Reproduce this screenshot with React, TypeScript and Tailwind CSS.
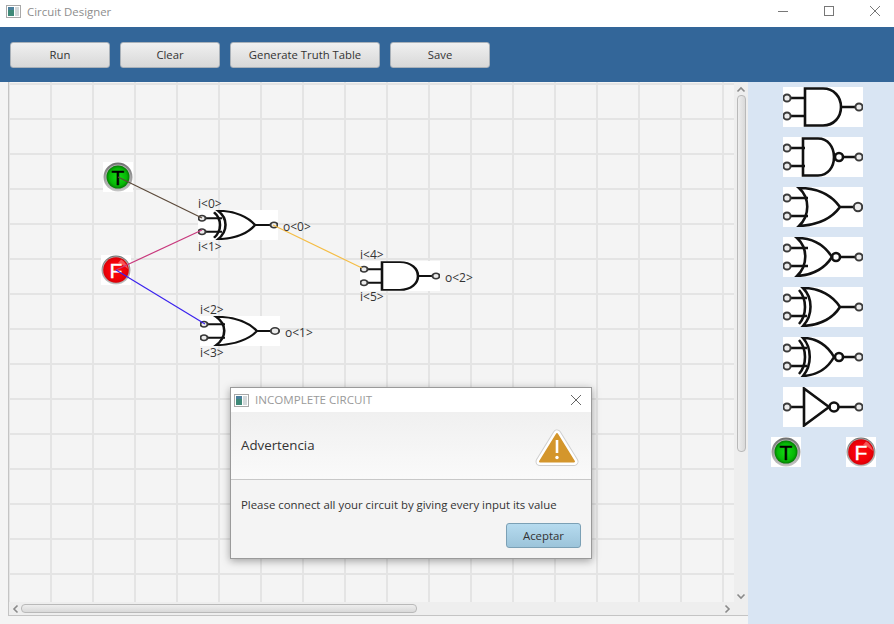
const FONT = "font-['Open_Sans',sans-serif]";

type GateKind = "and" | "nand" | "or" | "nor" | "xor" | "xnor" | "not";

function Pin({ cx, cy, r = 3.6 }: { cx: number; cy: number; r?: number }) {
  return <circle cx={cx} cy={cy} r={r} fill="#ececec" stroke="#3a3a3a" strokeWidth="2" />;
}

function Gate({ kind, className }: { kind: GateKind; className: string }) {
  const stroke = { fill: "none", stroke: "#111", strokeWidth: 2.6 };
  return (
    <svg viewBox="0 0 80 40" preserveAspectRatio="none" className={`bg-white ${className}`}>
      {kind === "not" ? (
        <>
          <path d="M7 20H21M21 1.5V38.5L46 20ZM56 20H72" {...stroke} />
          <circle cx="51" cy="20" r="4.5" {...stroke} />
          <Pin cx={4} cy={20} />
          <Pin cx={76} cy={20} />
        </>
      ) : (
        <>
          {(kind === "and" || kind === "nand") && (
            <>
              <path d="M7 11H22M7 29H22" {...stroke} />
              {kind === "and" ? (
                <path d="M22 1.5H40C51 1.5 58 10 58 20C58 30 51 38.5 40 38.5H22Z M58 20H72" {...stroke} />
              ) : (
                <path d="M20 1.5H35C45 1.5 51 10 51 20C51 30 45 38.5 35 38.5H20Z M60 20H72" {...stroke} />
              )}
            </>
          )}
          {(kind === "or" || kind === "nor") && (
            <>
              <path d="M7 11H25M7 29H25" {...stroke} />
              {kind === "or" ? (
                <path d="M16 1C36 1 49 9 57 20C49 31 36 38 16 39C27 28 27 11 16 1Z M57 20H71" {...stroke} />
              ) : (
                <path d="M14 1C30 1 42 9 49 20C42 31 30 38 14 39C25 28 25 11 14 1Z M58 20H72" {...stroke} />
              )}
            </>
          )}
          {(kind === "xor" || kind === "xnor") && (
            <>
              <path d="M7 11H24M7 29H24" {...stroke} />
              <path d="M16 3C24 12 24 28 16 37" {...stroke} />
              {kind === "xor" ? (
                <path d="M20 1C37 1 50 9 57 20C50 31 37 38 20 39C30 28 30 11 20 1Z M57 20H72" {...stroke} />
              ) : (
                <path d="M20 1C34 1 45 9 51 20C45 31 34 38 20 39C29 28 29 11 20 1Z M60 20H72" {...stroke} />
              )}
            </>
          )}
          {(kind === "nand" || kind === "nor" || kind === "xnor") && (
            <circle cx={kind === "nor" ? 53 : 56} cy="20" r="4" {...stroke} />
          )}
          <Pin cx={4} cy={11} />
          <Pin cx={4} cy={29} />
          <Pin cx={kind === "or" ? 75 : 76} cy={20} r={kind === "or" ? 4.2 : 3.6} />
        </>
      )}
    </svg>
  );
}

function Node({ value, className }: { value: "T" | "F"; className: string }) {
  const on = value === "T";
  const ringId = `ring-${value}`;
  const coreId = `core-${value}`;
  return (
    <svg viewBox="0 0 30 30" className={`bg-white ${className}`}>
      <defs>
        <linearGradient id={ringId} x1="0" y1="0" x2="0" y2="1">
          <stop offset="0" stopColor="#6f6f6f" />
          <stop offset="1" stopColor="#c6c6c6" />
        </linearGradient>
        <radialGradient id={coreId}>
          <stop offset="0" stopColor={on ? "#16dc16" : "#ff0a0a"} />
          <stop offset="0.75" stopColor={on ? "#06b806" : "#f00008"} />
          <stop offset="1" stopColor={on ? "#037a03" : "#d80006"} />
        </radialGradient>
      </defs>
      <circle cx="15" cy="15" r="14.5" fill={`url(#${ringId})`} />
      <circle cx="15" cy="15" r={on ? 12.5 : 13.5} fill="#b0b0b0" />
      <circle cx="15" cy="15" r={on ? 11.5 : 12.8} fill={`url(#${coreId})`} />
      {!on && <path d="M20 4.5C23.5 6.5 26.5 10.5 27 14C24 11 20 9 17 8Z" fill="#ff8a8a" opacity="0.6" />}
      <text
        x="15"
        y="22.5"
        textAnchor="middle"
        fontSize="21"
        fontFamily="Liberation Sans, sans-serif"
        fill={on ? "#000" : "#fff"}
        stroke={on ? "#000" : "#fff"}
        strokeWidth="0.4"
      >
        {value}
      </text>
    </svg>
  );
}

function WindowIcon({ className }: { className: string }) {
  return (
    <svg viewBox="0 0 15 13" className={className}>
      <rect x="0.5" y="0.5" width="14" height="12" fill="#fff" stroke="#a8a8a8" />
      <rect x="2" y="2" width="6" height="9" fill="#3f8a78" />
      <rect x="2" y="2" width="6" height="3" fill="#4a7f9c" />
      <rect x="9" y="2" width="4" height="9" fill="#d2d8da" />
    </svg>
  );
}

function ToolButton({ label, width }: { label: string; width: string }) {
  return (
    <button
      className={`h-[26px] ${width} rounded-[3px] border border-[#a9b1b9] bg-gradient-to-b from-[#f0f0f0] to-[#d8d8d8] pt-[1px] text-[11.3px] text-[#333]`}
    >
      {label}
    </button>
  );
}

function Label({ text, className }: { text: string; className: string }) {
  return <span className={`absolute text-xs leading-4 text-[#333] ${className}`}>{text}</span>;
}

function Chevron({ d, className }: { d: string; className: string }) {
  return (
    <svg viewBox="0 0 10 10" className={className}>
      <path d={d} fill="none" stroke="#8a8a8a" strokeWidth="1.6" />
    </svg>
  );
}

export default function App() {
  return (
    <div className={`relative flex h-[624px] w-[894px] flex-col overflow-hidden bg-[#f4f4f4] ${FONT}`}>
      {/* title bar */}
      <div className="flex h-[27px] items-center bg-white pb-[5px] pl-[6px]">
        <WindowIcon className="h-[13px] w-[15px]" />
        <span className="ml-[6px] mt-[1px] text-[11.4px] text-[#8d8d8d]">Circuit Designer</span>
        <div className="ml-auto flex items-center gap-[36px] pr-[14px]">
          <svg viewBox="0 0 10 10" className="h-[10px] w-[10px]">
            <path d="M0 5.5H10" stroke="#777" />
          </svg>
          <svg viewBox="0 0 10 10" className="h-[10px] w-[10px]">
            <rect x="0.5" y="0.5" width="9" height="9" fill="none" stroke="#777" />
          </svg>
          <svg viewBox="0 0 10 10" className="h-[10px] w-[10px]">
            <path d="M0 0L10 10M10 0L0 10" stroke="#777" />
          </svg>
        </div>
      </div>

      {/* toolbar */}
      <div className="flex h-[55px] items-center gap-[10px] bg-[#336699] px-[10px]">
        <ToolButton label="Run" width="w-[100px]" />
        <ToolButton label="Clear" width="w-[100px]" />
        <ToolButton label="Generate Truth Table" width="w-[150px]" />
        <ToolButton label="Save" width="w-[100px]" />
      </div>

      <div className="flex flex-1">
        {/* canvas area */}
        <div className="flex w-[748px] flex-col pb-2 pl-2">
          <div className="flex flex-1 flex-col border-b border-l border-[#c4c4c4]">
            <div className="flex flex-1">
              <div className="relative flex-1 overflow-hidden bg-[#f4f4f4] bg-[linear-gradient(to_right,#e4e4e4_2px,transparent_2px),linear-gradient(to_bottom,#e4e4e4_2px,transparent_2px)] bg-[size:42px_35px] bg-[position:-1px_1px]">
                <Node value="T" className="absolute left-[94px] top-[80px] h-[30px] w-[30px]" />
                <Node value="F" className="absolute left-[92px] top-[173px] h-[30px] w-[30px]" />
                <Gate kind="xor" className="absolute left-[189px] top-[128px] h-[30px] w-[80px]" />
                <Gate kind="or" className="absolute left-[191px] top-[234px] h-[30px] w-[80px]" />
                <Gate kind="and" className="absolute left-[351px] top-[179px] h-[30px] w-[80px]" />
                <svg viewBox="0 0 725 520" className="absolute left-0 top-0 h-[520px] w-[725px]">
                  <path d="M109 95L193 136" stroke="#5c4a3a" strokeWidth="1.2" />
                  <path d="M107 188L193 148" stroke="#c8397d" strokeWidth="1.2" />
                  <path d="M107 188L196 242" stroke="#3a22ee" strokeWidth="1.2" />
                  <path d="M264 143L353 186" stroke="#f5bd45" strokeWidth="1.2" />
                </svg>
                <Label text="i<0>" className="left-[189px] top-[114px]" />
                <Label text="i<1>" className="left-[189px] top-[157px]" />
                <Label text="o<0>" className="left-[274px] top-[137px]" />
                <Label text="i<2>" className="left-[191px] top-[220px]" />
                <Label text="i<3>" className="left-[191px] top-[263px]" />
                <Label text="o<1>" className="left-[276px] top-[243px]" />
                <Label text="i<4>" className="left-[351px] top-[165px]" />
                <Label text="i<5>" className="left-[351px] top-[207px]" />
                <Label text="o<2>" className="left-[436px] top-[188px]" />
              </div>
              {/* vertical scrollbar */}
              <div className="flex w-[14px] flex-col items-center bg-[#eeeeee] pt-[3px]">
                <Chevron d="M1.5 6.5L5 3L8.5 6.5" className="h-[10px] w-[10px]" />
                <div className="h-[357px] w-[9px] rounded-[4px] border border-[#b9b9b9] bg-gradient-to-r from-[#eeeeee] to-[#d9d9d9]" />
                <Chevron d="M1.5 3.5L5 7L8.5 3.5" className="mt-auto mb-[1px] h-[10px] w-[10px]" />
              </div>
            </div>
            {/* horizontal scrollbar */}
            <div className="flex h-[13px] items-center bg-[#eeeeee] pl-[2px] pr-[16px]">
              <Chevron d="M6.5 1.5L3 5L6.5 8.5" className="h-[10px] w-[10px]" />
              <div className="h-[9px] w-[396px] rounded-[4px] border border-[#b9b9b9] bg-gradient-to-b from-[#eeeeee] to-[#d9d9d9]" />
              <Chevron d="M3.5 1.5L7 5L3.5 8.5" className="ml-auto h-[10px] w-[10px]" />
            </div>
          </div>
        </div>

        {/* palette */}
        <div className="flex flex-1 flex-col gap-[10px] bg-[#d9e5f3] pl-[35px] pt-[5px]">
          <Gate kind="and" className="h-[40px] w-[80px]" />
          <Gate kind="nand" className="h-[40px] w-[80px]" />
          <Gate kind="or" className="h-[40px] w-[80px]" />
          <Gate kind="nor" className="h-[40px] w-[80px]" />
          <Gate kind="xor" className="h-[40px] w-[80px]" />
          <Gate kind="xnor" className="h-[40px] w-[80px]" />
          <Gate kind="not" className="h-[40px] w-[80px]" />
          <div className="-ml-3 flex gap-[45px]">
            <Node value="T" className="h-[30px] w-[30px]" />
            <Node value="F" className="h-[30px] w-[30px]" />
          </div>
        </div>
      </div>

      {/* dialog */}
      <div className="absolute left-[230px] top-[387px] flex h-[172px] w-[362px] flex-col border border-[#9a9a9a] bg-[#f4f4f4] shadow-[0_2px_8px_rgba(0,0,0,0.35)]">
        <div className="flex h-[24px] items-center bg-white pl-[3px]">
          <WindowIcon className="h-[13px] w-[15px]" />
          <span className="ml-[6px] text-[11.6px] text-[#9a9a9a]">INCOMPLETE CIRCUIT</span>
          <svg viewBox="0 0 10 10" className="ml-auto mr-[10px] h-[10px] w-[10px]">
            <path d="M0 0L10 10M10 0L0 10" stroke="#666" />
          </svg>
        </div>
        <div className="flex h-[68px] items-center justify-between border-b border-[#c8c8c8] bg-gradient-to-b from-[#f0f0f0] to-[#fafafa] pl-[10px] pr-[12px]">
          <span className="mt-[1px] text-[13.3px] text-[#333]">Advertencia</span>
          <svg viewBox="0 0 44 42" className="h-[42px] w-[44px]">
            <path d="M22 9L39 36.5H5Z" fill="#fff" stroke="#cfcfcf" strokeWidth="9" strokeLinejoin="round" />
            <path d="M22 9L39 36.5H5Z" fill="#fff" stroke="#fff" strokeWidth="7" strokeLinejoin="round" />
            <path d="M22 9L39 36.5H5Z" fill="#d4962c" stroke="#d4962c" strokeWidth="2" strokeLinejoin="round" />
            <path d="M22 15V28" stroke="#fff" strokeWidth="2.6" />
            <circle cx="22" cy="32.5" r="1.7" fill="#fff" />
          </svg>
        </div>
        <div className="flex flex-1 flex-col pb-[10px] pl-[10px] pr-[10px] pt-[17px]">
          <span className="text-[11.4px] leading-4 text-[#333]">Please connect all your circuit by giving every input its value</span>
          <button className="mt-auto h-[25px] w-[75px] self-end rounded-[3px] border border-[#7ba0b5] bg-gradient-to-b from-[#b6dbef] to-[#9cc4da] text-[11.4px] text-[#333]">
            Aceptar
          </button>
        </div>
      </div>
    </div>
  );
}
